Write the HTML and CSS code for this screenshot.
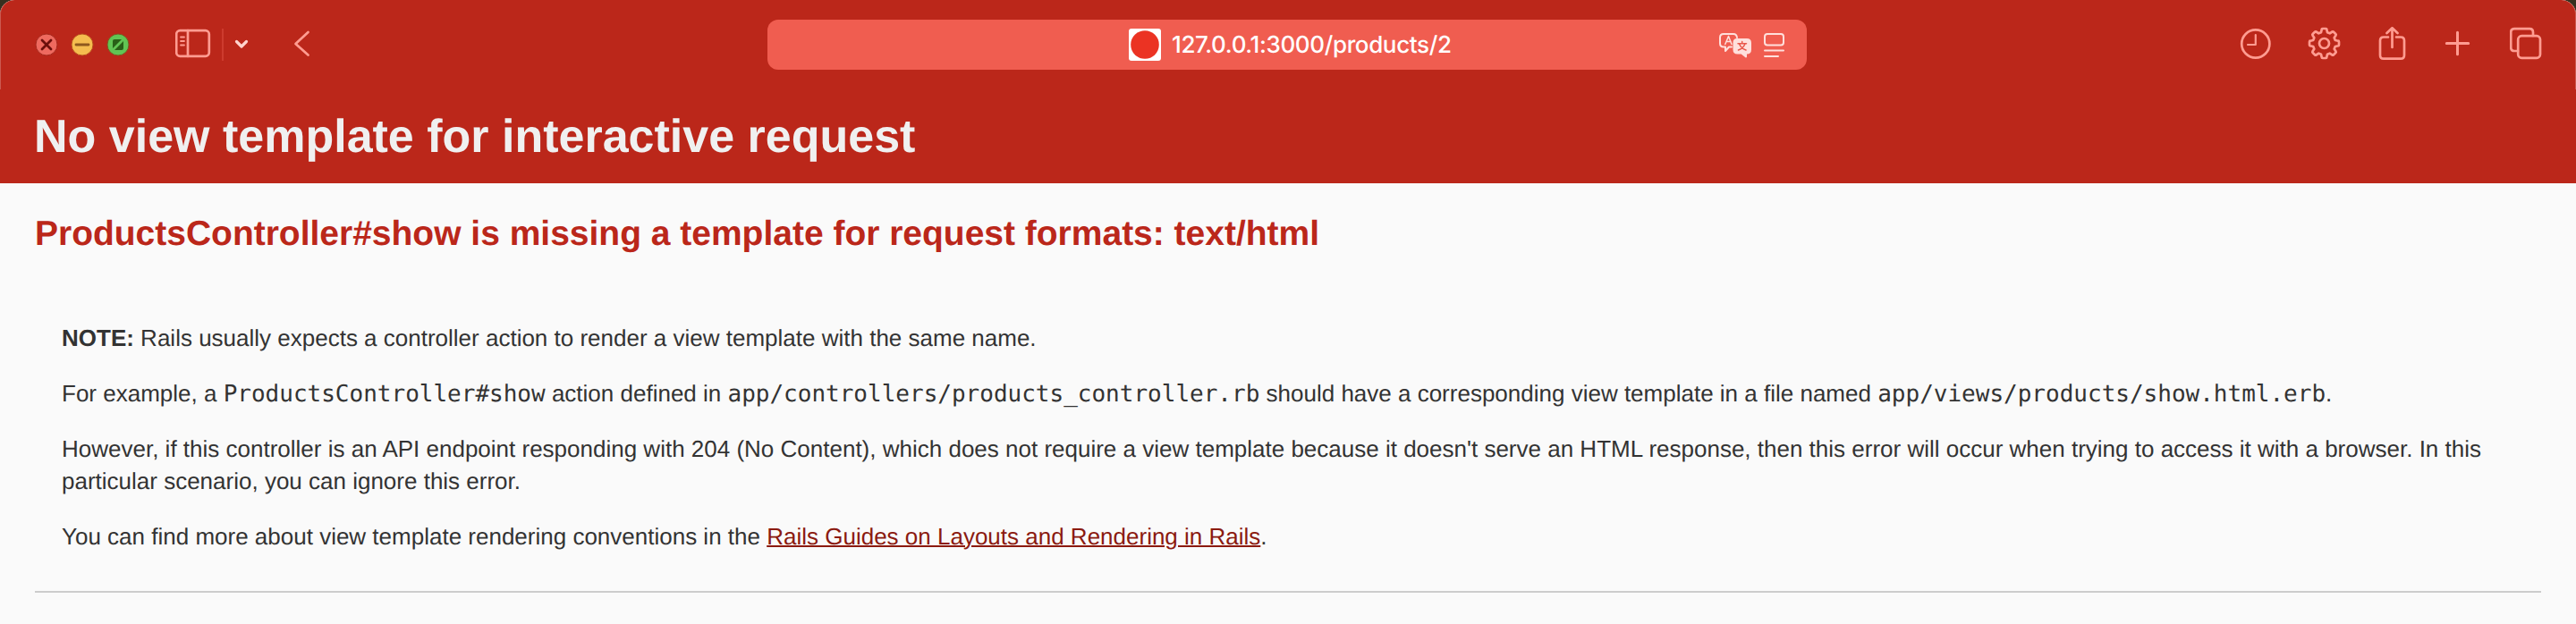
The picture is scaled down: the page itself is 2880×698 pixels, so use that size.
FILE: index.html
```html
<!DOCTYPE html>
<html lang="en">
<head>
<meta charset="utf-8">
<title>Action Controller: Exception caught</title>
<link rel="stylesheet" href="styles.css">
</head>
<body>
<div class="window">
  <div class="toolbar">
    <div class="toolbar-left">
      <div class="lights">
        <svg class="light" viewBox="-13 -13 26 26"><circle r="12" fill="#ee6a5f" stroke="#a52a1f"/><path d="M-5-5 5 5M5-5-5 5" stroke="#6b0f0b" stroke-width="2.8" stroke-linecap="round"/></svg>
        <svg class="light" viewBox="-13 -13 26 26"><circle r="12" fill="#f5bd4f" stroke="#b8501f"/><path d="M-7 0H7" stroke="#8f591d" stroke-width="2.8" stroke-linecap="round"/></svg>
        <svg class="light" viewBox="-13 -13 26 26"><circle r="12" fill="#61c554" stroke="#7a5a20"/><path d="M-6 4V-4Q-6-6-4-6H4ZM6-4V4Q6 6 4 6H-4Z" fill="#286017"/></svg>
      </div>
      <svg class="icon sidebar-icon" viewBox="196 30 40 40"><rect x="197.2" y="34.2" width="36.6" height="28.6" rx="4"/><path d="M210 34V63"/><path d="M202 41.500h4M202 46h4M202 50.500h4" stroke-width="1.800"/></svg>
      <span class="divider"></span>
      <svg class="icon menu-icon" viewBox="260 30 20 40"><path d="M264.500 46.500 270 52l5.500-5.500" stroke-width="3.200"/></svg>
      <svg class="icon back-icon" viewBox="320 30 40 40"><path d="M344.500 36 330.500 49 344.500 61.500"/></svg>
    </div>
    <div class="address">
      <svg class="favicon" viewBox="0 0 36 36"><rect width="36" height="36" rx="3" fill="#fff"/><circle cx="18" cy="18" r="15.800" fill="#eb3323"/></svg>
      <span class="url">127.0.0.1:3000/products/2</span>
      <div class="address-tools">
        <svg class="tool translate-icon" viewBox="1920 30 40 40">
          <path d="M1936 52.500H1933L1929 57V52.500H1927Q1923 52.500 1923 48.500V42Q1923 38 1927 38H1938Q1941.500 38 1942 42"/>
          <path d="M1928.800 49.500 1932.500 40.500 1936 49.500M1930 46.500H1935" stroke-width="1.500"/>
          <path d="M1942 44H1953Q1957 44 1957 48V55.500Q1957 59.500 1953 59.500H1952V63.500L1947 59.500H1942.500Q1938.500 59.500 1938.500 55.500V48Q1938.500 44 1942 44Z" class="bubble"/>
          <path d="M1943 48.700H1952.500M1947.700 46.500V48.500M1951 49Q1949 54 1943.500 56M1944.500 49Q1946.500 54 1952 56" class="glyph"/>
        </svg>
        <svg class="tool reader-icon" viewBox="1966 30 34 40"><rect x="1973" y="38" width="21" height="12.500" rx="3"/><path d="M1973 56.500H1994M1973 63H1988"/></svg>
      </div>
    </div>
    <div class="toolbar-right">
      <svg class="icon" viewBox="2502 30 40 40"><circle cx="2521.800" cy="49" r="15.600"/><path d="M2521.800 39V50H2513" stroke-width="2.200"/></svg>
      <svg class="icon" viewBox="2578 30 40 40"><circle cx="2598.500" cy="48.500" r="5.500"/><path d="M2595.700 33Q2595.700 32 2596.700 32H2600.300Q2601.300 32 2601.300 33L2602 36.200 2604.700 37.300 2607.500 35.500Q2608.300 35 2609 35.700L2611.300 38Q2612 38.700 2611.500 39.500L2609.700 42.300 2610.800 45 2614 45.700Q2615 45.700 2615 46.700V50.300Q2615 51.300 2614 51.300L2610.800 52 2609.700 54.700 2611.500 57.500Q2612 58.300 2611.300 59L2609 61.300Q2608.300 62 2607.500 61.500L2604.700 59.700 2602 60.800 2601.300 64Q2601.300 65 2600.300 65H2596.700Q2595.700 65 2595.700 64L2595 60.800 2592.300 59.700 2589.500 61.500Q2588.700 62 2588 61.300L2585.700 59Q2585 58.300 2585.500 57.500L2587.300 54.700 2586.200 52 2583 51.300Q2582 51.300 2582 50.300V46.700Q2582 45.700 2583 45.700L2586.200 45 2587.300 42.300 2585.500 39.500Q2585 38.700 2585.700 38L2588 35.700Q2588.700 35 2589.500 35.500L2592.300 37.300 2595 36.200Z"/></svg>
      <svg class="icon" viewBox="2654 30 40 40"><path d="M2670 41.500H2665Q2661 41.500 2661 45.500V61.700Q2661 65.700 2665 65.700H2684Q2688 65.700 2688 61.700V45.500Q2688 41.500 2684 41.500H2679M2674.500 53V32M2668.500 37 2674.500 31.300 2680.500 37"/></svg>
      <svg class="icon" viewBox="2730 30 40 40"><path d="M2735.300 48.500H2759.700M2747.500 36.300V60.700" stroke-width="3"/></svg>
      <svg class="icon" viewBox="2806 30 40 40"><rect x="2815.200" y="40.200" width="24.800" height="24.600" rx="4"/><path d="M2815 57H2811.200Q2807.200 57 2807.200 53V36.200Q2807.200 32.200 2811.200 32.200H2828Q2832 32.200 2832 36.200V40"/></svg>
    </div>
  </div>
  <header class="page-header"><h1>No view template for interactive request</h1></header>
  <main class="page">
    <h2>ProductsController#show is missing a template for request formats: text/html</h2>
    <div class="summary">
      <p><strong>NOTE:</strong> Rails usually expects a controller action to render a view template with the same name.</p>
      <p>For example, a <code>ProductsController#show</code> action defined in <code>app/controllers/products_controller.rb</code> should have a corresponding view template in a file named <code>app/views/products/show.html.erb</code>.</p>
      <p>However, if this controller is an API endpoint responding with 204 (No Content), which does not require a view template because it doesn't serve an HTML response, then this error will occur when trying to access it with a browser. In this particular scenario, you can ignore this error.</p>
      <p>You can find more about view template rendering conventions in the <a href="#">Rails Guides on Layouts and Rendering in Rails</a>.</p>
    </div>
    <hr>
  </main>
</div>
</body>
</html>
```
FILE: styles.css
```css
* { box-sizing: border-box; }
body {
  margin: 0;
  background: #37301f;
  color: #333;
  font-family: "Liberation Sans", Helvetica, Arial, sans-serif;
  font-size: 26px;
  line-height: 36px;
  text-rendering: geometricPrecision;
}
.window {
  height: 698px;
  overflow: hidden;
  border-radius: 16px 16px 0 0;
  background: #fafafa;
}
.toolbar {
  display: grid;
  grid-template-columns: 858px 1162px 860px;
  height: 100px;
  align-items: center;
  border-radius: 16px 16px 0 0;
  background: #bb271a;
  box-shadow: inset 1px 0 #cb5a50, inset -1px 0 #cb5a50;
}
.toolbar-left, .toolbar-right { display: flex; align-items: center; }
.toolbar-left { padding-left: 39px; }
.toolbar-right { justify-content: flex-end; gap: 36px; padding-right: 34px; }
.lights { display: flex; gap: 14px; }
.light { width: 26px; height: 26px; display: block; }
.icon {
  width: 40px;
  height: 40px;
  fill: none;
  stroke: #ff9c91;
  stroke-width: 2.7;
  stroke-linecap: round;
  stroke-linejoin: round;
}
.sidebar-icon { margin-left: 51px; }
.divider { width: 2px; height: 36px; margin-left: 12px; background: #cd3b2e; }
.menu-icon { width: 20px; margin-left: 10px; stroke: #ffd3cd; }
.back-icon { margin-left: 40px; }
.address {
  display: flex;
  align-items: center;
  height: 56px;
  padding: 0 20px 0 404px;
  border-radius: 12px;
  background: #f05d50;
}
.favicon { width: 36px; height: 36px; }
.url {
  margin-left: 12px;
  padding-top: 2px;
  color: #fff;
  font-family: Inter, sans-serif;
  font-size: 26px;
  font-weight: 500;
  letter-spacing: -0.37px;
  white-space: nowrap;
}
.address-tools { display: flex; gap: 6px; margin-left: auto; }
.tool {
  width: 40px;
  height: 40px;
  fill: none;
  stroke: #ffe0dc;
  stroke-width: 2;
  stroke-linecap: round;
  stroke-linejoin: round;
}
.reader-icon { width: 34px; }
.bubble { fill: #ffe0dc; }
.glyph { stroke: #e9574a; stroke-width: 1.5; }
.page-header { height: 105px; padding: 23px 38px; background: #bb271a; color: #f0f0f0; }
h1 { margin: 0; font-size: 52px; line-height: 60px; }
.page { padding: 32px 39px 0; }
h2 { margin: 0; font-size: 39px; line-height: 50px; letter-spacing: -0.01px; color: #bb271a; }
.summary { padding: 73px 30px 0; }
p { margin: 0 0 26px; }
code { font-family: "DejaVu Sans Mono", monospace; font-size: 26px; line-height: 1; }
a { color: #8b1a10; text-decoration-thickness: 2px; }
hr { height: 2px; margin: 43px 0 0; border: 0; background: #ccc; }
```
